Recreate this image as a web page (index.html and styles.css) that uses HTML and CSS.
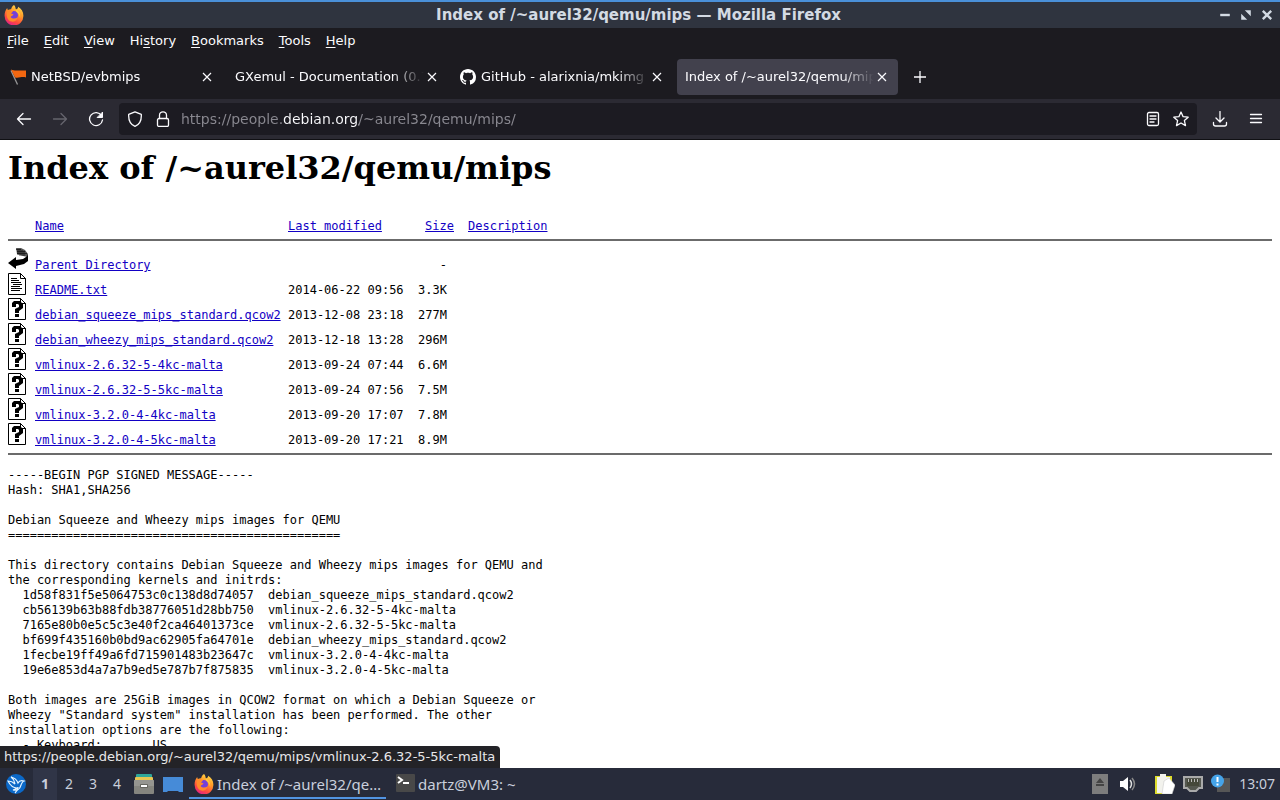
FILE: index.html
```html
<!DOCTYPE html>
<html lang="en">
<head>
<meta charset="utf-8">
<title>Index of /~aurel32/qemu/mips — Mozilla Firefox</title>
<link rel="stylesheet" href="styles.css">
</head>
<body>
<svg class="defs" aria-hidden="true">
  <defs>
    <linearGradient id="flame" x1="0.8" y1="0" x2="0.3" y2="1">
      <stop offset="0" stop-color="#ffe14d"/><stop offset="0.4" stop-color="#ff9a28"/><stop offset="0.75" stop-color="#ff4a3d"/><stop offset="1" stop-color="#e0218a"/>
    </linearGradient>
  </defs>
  <symbol id="firefox" viewBox="0 0 20 20">
    <path fill="url(#flame)" d="M10 0c1.500 1.500 1.500 3 1.800 4.200 1.500.2 2.200-1 2.300-2.400 3.500 2 5.400 5.500 5.300 9.200A9.400 9.400 0 0 1 .6 11C.4 8 1.600 4.900 3.200 3c.1 1 .3 1.600.8 2 .9-.6 2-.9 3.100-.8C7.500 2.500 8.500 1 10 0z"/>
    <circle cx="9.800" cy="10.200" r="4.200" fill="#7540d8"/>
    <path fill="#ff8a2b" d="M3 6.500c2-1.600 4.300-1.400 6 0l-2 2 2.500.8c-.6 1.700-2 1.400-2.900 2.700 1.500 2 4.800 1.900 6.800.4-.8 3.400-3.500 4.800-6.100 4.200C3.500 15.600 1.900 10.500 3 6.500z"/>
    <path fill="#ffc93f" d="M11.500 4.500c3 1 5.300 4 4.600 8.500-.4-3-1.800-5-3.600-6z"/>
  </symbol>
  <symbol id="close" viewBox="0 0 16 16"><path d="M4 4l8 8M12 4l-8 8" stroke="currentColor" stroke-width="1.200" fill="none"/></symbol>
  <symbol id="unknown" viewBox="0 0 20 22">
    <path d="M.5.5h12l5 5v16H.5z" fill="#fff" stroke="#000"/>
    <path d="M12.500.5v5h5z" fill="#fff" stroke="#000"/>
    <path d="M4 9V5l2-2h6l3 3v4l-4 3v2H7v-4l4-2V7L10 6H8v3zM7 16h4v3H7z" fill="#000"/>
  </symbol>
  <symbol id="textfile" viewBox="0 0 20 22">
    <path d="M.5.5h12l5 5v16H.5z" fill="#fff" stroke="#000"/>
    <path d="M12.500.5v5h5z" fill="#fff" stroke="#000"/>
    <path d="M3 5.500h6M3 7.500h8M3 9.500h10M5 11.500h9M3 13.500h9M3 15.500h11M3 17.500h9" stroke="#000"/>
  </symbol>
  <symbol id="back" viewBox="0 0 20 22">
    <path d="M8 0h5l4 2 3 4v3l-5-1-6-2z" fill="#555"/>
    <path d="M8 1.500h5M9 3.500h8M9 5.500h10M10 1v6M12 1v7M14 2v6M16 3v5" stroke="#111" stroke-width=".7"/>
    <path d="M20 7v6l-4 3-8 2v3L0 15l8-6v3l7-1 3-2z" fill="#000"/>
  </symbol>
</svg>

<header class="titlebar">
  <svg class="app-icon"><use href="#firefox"/></svg>
  <div class="window-title">Index of /~aurel32/qemu/mips — Mozilla Firefox</div>
  <div class="window-controls">
    <button aria-label="Minimize"><svg viewBox="0 0 10 10"><path d="M1 5h8" stroke="currentColor" stroke-width="2"/></svg></button>
    <button aria-label="Restore"><svg viewBox="0 0 10 10"><path d="M4 1h5v5zM1 4v5h5z" fill="currentColor"/></svg></button>
    <button aria-label="Close"><svg viewBox="0 0 10 10"><path d="M1.500 1.500l7 7M8.500 1.500l-7 7" stroke="currentColor" stroke-width="2"/></svg></button>
  </div>
</header>

<nav class="menubar" aria-label="Menu">
  <button><u>F</u>ile</button><button><u>E</u>dit</button><button><u>V</u>iew</button><button>Hi<u>s</u>tory</button><button><u>B</u>ookmarks</button><button><u>T</u>ools</button><button><u>H</u>elp</button>
</nav>

<div class="tabs">
  <div class="tab">
    <svg class="favicon" viewBox="0 0 16 16"><path d="M1 1.500l6.500 14" stroke="#999" stroke-width="1.300"/><path d="M1 .5c4 2 8 .5 15 1v7C12 7 9 9.500 5 8.500z" fill="#f26711"/></svg>
    <button class="tab-label">NetBSD/evbmips</button>
    <button class="tab-close" aria-label="Close tab"><svg><use href="#close"/></svg></button>
  </div>
  <div class="tab">
    <button class="tab-label">GXemul - Documentation (0.7</button>
    <button class="tab-close" aria-label="Close tab"><svg><use href="#close"/></svg></button>
  </div>
  <div class="tab">
    <svg class="favicon" viewBox="0 0 16 16"><path fill="#fff" d="M8 0C3.580 0 0 3.580 0 8c0 3.540 2.290 6.530 5.470 7.590.4.07.55-.17.55-.38 0-.19-.01-.82-.01-1.490-2.010.37-2.530-.49-2.690-.94-.09-.23-.48-.94-.82-1.130-.28-.15-.68-.52-.01-.53.63-.01 1.080.58 1.230.82.72 1.210 1.870.87 2.330.66.07-.52.28-.87.51-1.070-1.780-.2-3.640-.89-3.640-3.950 0-.87.31-1.590.82-2.150-.08-.2-.36-1.020.08-2.120 0 0 .67-.21 2.200.82.64-.18 1.320-.27 2-.27s1.360.09 2 .27c1.530-1.040 2.200-.82 2.200-.82.44 1.100.16 1.920.08 2.120.51.56.82 1.270.82 2.150 0 3.070-1.870 3.750-3.650 3.950.29.25.54.73.54 1.480 0 1.070-.01 1.930-.01 2.200 0 .21.15.46.55.38A8.010 8.010 0 0 0 16 8c0-4.420-3.580-8-8-8z"/></svg>
    <button class="tab-label">GitHub - alarixnia/mkimg</button>
    <button class="tab-close" aria-label="Close tab"><svg><use href="#close"/></svg></button>
  </div>
  <div class="tab selected">
    <button class="tab-label">Index of /~aurel32/qemu/mips</button>
    <button class="tab-close" aria-label="Close tab"><svg><use href="#close"/></svg></button>
  </div>
  <button class="new-tab" aria-label="New tab"><svg viewBox="0 0 16 16"><path d="M8 2v12M2 8h12" stroke="currentColor" stroke-width="1.300"/></svg></button>
</div>

<div class="toolbar">
  <button class="tool" aria-label="Back"><svg viewBox="0 0 16 16"><path d="M14.500 8h-13M7 2.500L1.500 8 7 13.500"/></svg></button>
  <button class="tool dim" aria-label="Forward"><svg viewBox="0 0 16 16"><path d="M1.500 8h13M9 2.500l5.500 5.500L9 13.500"/></svg></button>
  <button class="tool" aria-label="Reload"><svg viewBox="0 0 16 16"><path d="M13.500 4.500A6.500 6.500 0 1 0 14.500 9"/><path d="M14.500 1.500v5h-5z" fill="currentColor" stroke-width="1"/></svg></button>
  <div class="urlbar">
    <svg class="url-icon" viewBox="0 0 16 16"><path d="M8 .8l6.300 2.600c.3 5-1.600 10-6.300 12-4.700-2-6.600-7-6.300-12z"/></svg>
    <svg class="url-icon lock" viewBox="0 0 16 16"><rect x="2.500" y="7.500" width="11" height="8" rx="1.500"/><path d="M4.500 7.500V4.300a3.500 3.500 0 0 1 7 0v3.200"/></svg>
    <input class="url" type="text" aria-label="Address" value="https://people.debian.org/~aurel32/qemu/mips/">
    <button class="tool" aria-label="Reader view"><svg viewBox="0 0 16 16"><rect x="2.500" y="1.500" width="11" height="13" rx="1.500"/><path d="M5 5h6M5 8h6M5 11h4"/></svg></button>
    <button class="tool" aria-label="Bookmark this page"><svg viewBox="0 0 16 16"><path d="M8 1l2.100 4.700 5.100.5-3.800 3.400 1.100 5L8 12l-4.500 2.600 1.100-5L.8 6.200l5.100-.5z"/></svg></button>
  </div>
  <button class="tool" aria-label="Downloads"><svg viewBox="0 0 16 16"><path d="M8 .5v10M4 7l4 4 4-4M1.500 11.500v1.500a2 2 0 0 0 2 2h9a2 2 0 0 0 2-2v-1.500"/></svg></button>
  <button class="tool" aria-label="Open application menu"><svg viewBox="0 0 16 16"><path d="M2.500 3.500h11M2.500 7.500h11M2.500 11.500h11"/></svg></button>
</div>

<main class="viewport">
  <div class="page">
    <h1>Index of /~aurel32/qemu/mips</h1>
    <table class="listing">
      <colgroup><col class="c-icon"><col class="c-name"><col class="c-date"><col class="c-size"><col></colgroup>
      <thead>
        <tr><th></th><th><a href="#">Name</a></th><th><a href="#">Last modified</a></th><th class="size"><a href="#">Size</a></th><th class="desc"><a href="#">Description</a></th></tr>
      </thead>
      <tbody>
        <tr><td><svg><use href="#back"/></svg></td><td><a href="#">Parent Directory</a></td><td></td><td class="size">-</td><td></td></tr>
        <tr><td><svg><use href="#textfile"/></svg></td><td><a href="#">README.txt</a></td><td>2014-06-22 09:56</td><td class="size">3.3K</td><td></td></tr>
        <tr><td><svg><use href="#unknown"/></svg></td><td><a href="#">debian_squeeze_mips_standard.qcow2</a></td><td>2013-12-08 23:18</td><td class="size">277M</td><td></td></tr>
        <tr><td><svg><use href="#unknown"/></svg></td><td><a href="#">debian_wheezy_mips_standard.qcow2</a></td><td>2013-12-18 13:28</td><td class="size">296M</td><td></td></tr>
        <tr><td><svg><use href="#unknown"/></svg></td><td><a href="#">vmlinux-2.6.32-5-4kc-malta</a></td><td>2013-09-24 07:44</td><td class="size">6.6M</td><td></td></tr>
        <tr><td><svg><use href="#unknown"/></svg></td><td><a href="#">vmlinux-2.6.32-5-5kc-malta</a></td><td>2013-09-24 07:56</td><td class="size">7.5M</td><td></td></tr>
        <tr><td><svg><use href="#unknown"/></svg></td><td><a href="#">vmlinux-3.2.0-4-4kc-malta</a></td><td>2013-09-20 17:07</td><td class="size">7.8M</td><td></td></tr>
        <tr><td><svg><use href="#unknown"/></svg></td><td><a href="#">vmlinux-3.2.0-4-5kc-malta</a></td><td>2013-09-20 17:21</td><td class="size">8.9M</td><td></td></tr>
      </tbody>
    </table>
<pre class="readme">-----BEGIN PGP SIGNED MESSAGE-----
Hash: SHA1,SHA256

Debian Squeeze and Wheezy mips images for QEMU
==============================================

This directory contains Debian Squeeze and Wheezy mips images for QEMU and
the corresponding kernels and initrds:
  1d58f831f5e5064753c0c138d8d74057  debian_squeeze_mips_standard.qcow2
  cb56139b63b88fdb38776051d28bb750  vmlinux-2.6.32-5-4kc-malta
  7165e80b0e5c5c3e40f2ca46401373ce  vmlinux-2.6.32-5-5kc-malta
  bf699f435160b0bd9ac62905fa64701e  debian_wheezy_mips_standard.qcow2
  1fecbe19ff49a6fd715901483b23647c  vmlinux-3.2.0-4-4kc-malta
  19e6e853d4a7a7b9ed5e787b7f875835  vmlinux-3.2.0-4-5kc-malta

Both images are 25GiB images in QCOW2 format on which a Debian Squeeze or
Wheezy "Standard system" installation has been performed. The other
installation options are the following:
  - Keyboard:       US</pre>
  </div>
  <div class="link-status">https://people.debian.org/~aurel32/qemu/mips/vmlinux-2.6.32-5-5kc-malta</div>
</main>

<footer class="taskbar">
  <button class="start" aria-label="Application menu"><svg viewBox="0 0 20 20"><circle cx="10" cy="10" r="10" fill="#0b68c8"/><path d="M2 7c3 0 5 1 7 3-1-3-1-5-4-7 4 1 6 3 7 6 1-2 3-3 6-2-2 .5-2 2-3 4-1 4-4 6-8 5 2-.5 3-1 4-2-4 0-7-3-9-7z" fill="none" stroke="#e5f4ff" stroke-width="1.200"/><path d="M12 13c0 3-1 4-3 6" fill="none" stroke="#e5f4ff" stroke-width="1.200"/></svg></button>
  <div class="desktops"><button class="current">1</button><button>2</button><button>3</button><button>4</button></div>
  <button class="launcher" aria-label="File manager"><svg viewBox="0 0 20 20"><path d="M2 4V1q0-1 1-1h14q1 0 1 1v3z" fill="#2fa79a"/><path d="M1 7V4q0-1 1-1h16q1 0 1 1v3z" fill="#e8c552"/><rect y="6" width="20" height="14" rx="1" fill="#85857f"/><path d="M0 7q0-1 1-1h18q1 0 1 1v5H0z" fill="#959590"/><rect x="6" y="10" width="8" height="4" rx="1" fill="#66665f"/><path d="M7 12h6" stroke="#fff" stroke-width="2"/></svg></button>
  <button class="launcher" aria-label="Show desktop"><svg viewBox="0 0 20 20"><path d="M0 3h20v15h-4l-1-1H5l-1 1H0z" fill="#468bd8"/></svg></button>
  <div class="tasks">
    <button class="task active"><svg><use href="#firefox"/></svg><span>Index of /~aurel32/qe…</span></button>
    <button class="task"><svg viewBox="0 0 20 20"><rect x="1" width="19" height="18" rx="1" fill="#484848"/><path d="M3 3l4 3-4 3" fill="none" stroke="#fff" stroke-width="2"/><path d="M8 9h6" stroke="#fff" stroke-width="2"/></svg><span>dartz@VM3: ~</span></button>
  </div>
  <div class="tray">
    <button aria-label="Removable media"><svg viewBox="0 0 20 20"><rect x="2" width="16" height="20" fill="#7d7d7d"/><path d="M6 9l4-5 4 5zM6 10h8v2H6z" fill="#444"/></svg></button>
    <button aria-label="Volume"><svg viewBox="0 0 20 20"><path d="M2 7h3l5-4v14l-5-4H2z" fill="#fff"/><path d="M12 6q3 4 0 8" stroke="#ddd" stroke-width="1.500" fill="none"/><path d="M14 4q5 6 0 12" stroke="#888" stroke-width="1.500" fill="none"/></svg></button>
    <button class="spaced" aria-label="Clipboard"><svg viewBox="0 0 20 20"><path d="M0 2h17v18H0z" fill="#dddc2d"/><path d="M2 3h13v16H2zM5 0h6v4H5z" fill="#f2f2ed"/><path d="M9 7l5-3 6 7-3 9H7z" fill="#fff" stroke="#ccc" stroke-width=".6"/></svg></button>
    <button aria-label="Network"><svg viewBox="0 0 20 20"><path d="M1 3h18v11h-3l-3 3H7l-3-3H1z" fill="#555850" stroke="#aaa" stroke-width="2"/><path d="M4 5h12v7H4z" fill="#45483a"/><path d="M5.500 5v3M8.500 5v3M11.500 5v3M14.500 5v3" stroke="#bbb"/></svg></button>
    <button aria-label="Notifications"><svg viewBox="0 0 20 20"><path d="M6 4h13v14H6z" fill="#565656"/><circle cx="6.500" cy="7" r="6.500" fill="#45a3e8"/><path d="M6.500 3v5M6.500 9.500v2" stroke="#fff" stroke-width="2"/></svg></button>
    <time>13:07</time>
  </div>
</footer>
</body>
</html>
```
FILE: styles.css
```css
* { box-sizing: border-box; }

body {
  margin: 0;
  height: 100vh;
  display: flex;
  flex-direction: column;
  overflow: hidden;
  background: #1c1b20;
  color: #fbfbfe;
  font: 13px/20px "DejaVu Sans", sans-serif;
}

button {
  margin: 0;
  padding: 0;
  border: 0;
  background: none;
  color: inherit;
  font: inherit;
}

svg { display: block; flex: none; }
.defs { position: absolute; width: 0; height: 0; }

.titlebar {
  display: grid;
  grid-template-columns: 1fr auto 1fr;
  align-items: center;
  height: 28px;
  padding: 0 7px 0 4px;
  border-top: 2px solid #4a90d9;
  background: #2f343f;
  color: #d3dae3;
  font-size: 15px;
  font-weight: bold;
}
.app-icon { width: 20px; height: 20px; }
.window-controls { display: flex; justify-content: flex-end; gap: 9px; }
.window-controls button { width: 12px; height: 12px; }
.window-controls svg { width: 12px; height: 12px; }

.menubar {
  display: flex;
  gap: 15px;
  height: 26px;
  align-items: center;
  padding: 0 7px;
}
.menubar u { text-underline-offset: 2px; }

.tabs {
  display: flex;
  align-items: center;
  gap: 4px;
  height: 45px;
  padding: 0 2px;
}
.tab {
  display: flex;
  align-items: center;
  width: 221px;
  height: 36px;
  padding: 0 8px;
  border-radius: 4px;
}
.selected { background: #42414d; }
.favicon { width: 16px; height: 16px; margin-right: 5px; }
.tab-label {
  flex: 1;
  min-width: 0;
  overflow: hidden;
  text-align: left;
  white-space: nowrap;
  -webkit-mask-image: linear-gradient(to left, transparent, #000 32px);
  mask-image: linear-gradient(to left, transparent, #000 32px);
}
.tab-close svg, .new-tab svg { width: 16px; height: 16px; }
.new-tab { padding: 0 10px; }

.toolbar {
  display: flex;
  align-items: center;
  gap: 4px;
  height: 41px;
  padding: 0 8px;
  border-bottom: 1px solid #101014;
  background: #2b2a33;
}
.tool { display: grid; place-items: center; width: 32px; height: 32px; }
.tool svg, .url-icon {
  width: 16px;
  height: 16px;
  fill: none;
  stroke: currentColor;
  stroke-width: 1.3;
  stroke-linejoin: round;
  stroke-linecap: round;
}
.dim { color: #66656e; }
.urlbar {
  flex: 1;
  display: flex;
  align-items: center;
  height: 32px;
  margin: 0 3px;
  padding: 0 2px 0 8px;
  border-radius: 4px;
  background: #1c1b22;
}
.url-icon { margin-right: 12px; }
.url-icon.lock { margin-right: 10px; }
.urlbar .tool { width: 28px; }
.url {
  flex: 1;
  min-width: 0;
  height: 24px;
  padding: 0;
  border: 0;
  outline: 0;
  background: linear-gradient(to right, #8a8991 102px, #fbfbfe 102px 178px, #8a8991 178px);
  -webkit-background-clip: text;
  background-clip: text;
  color: transparent;
  font: inherit;
  font-size: 14px;
}

.viewport {
  position: relative;
  flex: 1;
  min-height: 0;
  overflow: hidden;
  background: #fff;
  color: #000;
}
.page { padding: 8px; }
h1 { margin: 0; font: bold 32px/40px "DejaVu Serif", serif; }

.listing {
  width: 100%;
  margin-top: 22px;
  border-collapse: collapse;
  table-layout: fixed;
  font: 12px/15px "DejaVu Sans Mono", monospace;
}
.listing th, .listing td {
  height: 25px;
  padding: 0;
  font-weight: normal;
  text-align: left;
  vertical-align: bottom;
  white-space: nowrap;
}
.listing th { height: 30px; padding-bottom: 5px; }
.listing thead, .listing tbody { border-bottom: 2px solid #6b6b6b; }
.listing tbody tr:first-child td { height: 33px; }
.listing tbody tr:last-child td { height: 30px; padding-bottom: 5px; }
.listing svg { width: 20px; height: 22px; margin-bottom: 3px; }
.listing .size { text-align: right; }
.listing td.size { padding-right: 7px; }
.listing .desc { padding-left: 14px; }
.listing a { color: #1200c4; }
.c-icon { width: 27px; }
.c-name { width: 253px; }
.c-date { width: 130px; }
.c-size { width: 36px; }

.readme { margin: 13px 0 0; font: 12px/15px "DejaVu Sans Mono", monospace; }

.link-status {
  position: absolute;
  left: 0;
  bottom: 0;
  height: 22px;
  padding: 1px 5px 1px 4px;
  border-radius: 0 4px 0 0;
  background: #232327;
  color: #e8e8ea;
}

.taskbar {
  display: flex;
  align-items: center;
  height: 32px;
  padding: 0 5px 0 6px;
  background: #272b3a;
  color: #c9cfdc;
  font: 15px/20px "Noto Sans", sans-serif;
}
.taskbar svg { width: 20px; height: 20px; }
.desktops { display: flex; margin: 0 0 0 7px; font-size: 14px; }
.desktops button { width: 24px; height: 32px; }
.desktops .current { background: #303547; font-weight: bold; }
.launcher { padding: 0 4px 0 5px; }
.tasks { display: flex; gap: 4px; margin-left: 2px; }
.task {
  display: flex;
  align-items: center;
  gap: 3px;
  height: 30px;
  width: 197px;
  padding: 0 5px;
  white-space: nowrap;
}
.active { box-shadow: inset 0 -2px #5294e2; }
.tray { display: flex; align-items: center; gap: 8px; margin-left: auto; font-size: 14px; }
.tray .spaced { margin-left: 9px; }
```
